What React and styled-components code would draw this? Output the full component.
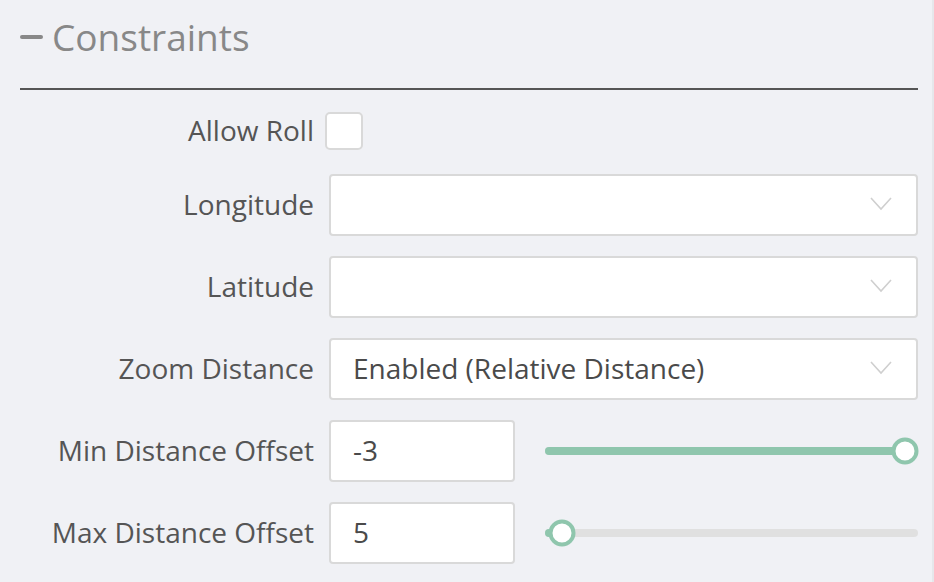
import styled, { createGlobalStyle } from "styled-components";

const GlobalStyle = createGlobalStyle`
  html, body {
    margin: 0;
    padding: 0;
    background: #f0f1f5;
    font-family: "Open Sans", "DejaVu Sans", sans-serif;
  }
`;

const COLORS = {
  label: "#555555",
  border: "#d9d9d9",
  green: "#8fc6ad",
  track: "#e0e0e0",
};

const rows = [
  { label: "Longitude", value: "" },
  { label: "Latitude", value: "" },
  { label: "Zoom Distance", value: "Enabled (Relative Distance)" },
];

const sliders = [
  { label: "Min Distance Offset", value: "-3", percent: 100 },
  { label: "Max Distance Offset", value: "5", percent: 1.2 },
];

const Chevron = () => (
  <svg width="22" height="14" viewBox="0 0 22 14" fill="none">
    <path d="M1 1 L11 12 L21 1" stroke="#cfcfcf" strokeWidth="1.6" />
  </svg>
);

// Constraints panel of the camera settings
const App = () => {
  return (
    <>
      <GlobalStyle />
      <Panel>
        <Header>
          <Dash />
          <Title>Constraints</Title>
        </Header>
        <Form>
          <Row>
            <Label>Allow Roll</Label>
            <Checkbox />
          </Row>
          {rows.map((row) => (
            <Row key={row.label}>
              <Label>{row.label}</Label>
              <Select>
                <span>{row.value}</span>
                <Chevron />
              </Select>
            </Row>
          ))}
          {sliders.map((slider) => (
            <Row key={slider.label}>
              <Label>{slider.label}</Label>
              <NumberBox>{slider.value}</NumberBox>
              <Slider>
                <Fill
                  style={{ width: `calc(13px + (100% - 26px) * ${slider.percent / 100})` }}
                />
                <Thumb
                  style={{ left: `calc(13px + (100% - 26px) * ${slider.percent / 100})` }}
                />
              </Slider>
            </Row>
          ))}
        </Form>
      </Panel>
      <Edge />
    </>
  );
};

const Panel = styled.div`
  height: 582px;
  box-sizing: border-box;
  width: 932px;
  padding: 0 14px 0 20px;
`;

const Header = styled.div`
  display: flex;
  align-items: center;
  gap: 9px;
  height: 72px;
  border-bottom: 2px solid #555;
  padding-bottom: 16px;
  box-sizing: content-box;
`;

const Dash = styled.div`
  width: 23px;
  height: 4px;
  border-radius: 2px;
  background: #888;
  margin-top: 1px;
`;

const Title = styled.h2`
  margin: 0;
  font-size: 37px;
  font-weight: 400;
  color: #888;
  line-height: 1;
`;

const Form = styled.div`
  display: flex;
  flex-direction: column;
  gap: 20px;
  padding-top: 22px;
`;

const Row = styled.div`
  display: flex;
  align-items: center;
  gap: 15px;

  &:first-child {
    margin-bottom: 4px;
  }
`;

const Label = styled.label`
  width: 294px;
  text-align: right;
  font-size: 28px;
  line-height: 34px;
  color: ${COLORS.label};
  flex-shrink: 0;
  white-space: nowrap;
  padding-bottom: 2px;
`;

const Checkbox = styled.div`
  width: 38px;
  height: 38px;
  box-sizing: border-box;
  margin-left: -4px;
  border: 2px solid ${COLORS.border};
  border-radius: 5px;
  background: #fff;
`;

const Select = styled.div`
  flex: 1;
  height: 62px;
  box-sizing: border-box;
  display: flex;
  align-items: center;
  justify-content: space-between;
  padding: 0 24px 2px 22px;
  border: 2px solid ${COLORS.border};
  border-radius: 4px;
  background: #fff;
  font-size: 28px;
  color: #4a4a4a;
`;

const NumberBox = styled.div`
  width: 186px;
  height: 62px;
  box-sizing: border-box;
  display: flex;
  align-items: center;
  padding: 0 0 2px 22px;
  border: 2px solid ${COLORS.border};
  border-radius: 4px;
  background: #fff;
  font-size: 28px;
  color: #4a4a4a;
`;

const Slider = styled.div`
  position: relative;
  flex: 1;
  height: 8px;
  margin-left: 15px;
  border-radius: 4px;
  background: ${COLORS.track};
`;

const Fill = styled.div`
  height: 100%;
  border-radius: 4px;
  background: ${COLORS.green};
`;

const Thumb = styled.div`
  position: absolute;
  top: 50%;
  width: 27px;
  height: 27px;
  box-sizing: border-box;
  transform: translate(-50%, -50%);
  border: 4px solid ${COLORS.green};
  border-radius: 50%;
  background: #fff;
`;

const Edge = styled.div`
  position: fixed;
  top: 0;
  right: 0;
  width: 2px;
  height: 100%;
  background: #e6e7eb;
`;

export default App;
